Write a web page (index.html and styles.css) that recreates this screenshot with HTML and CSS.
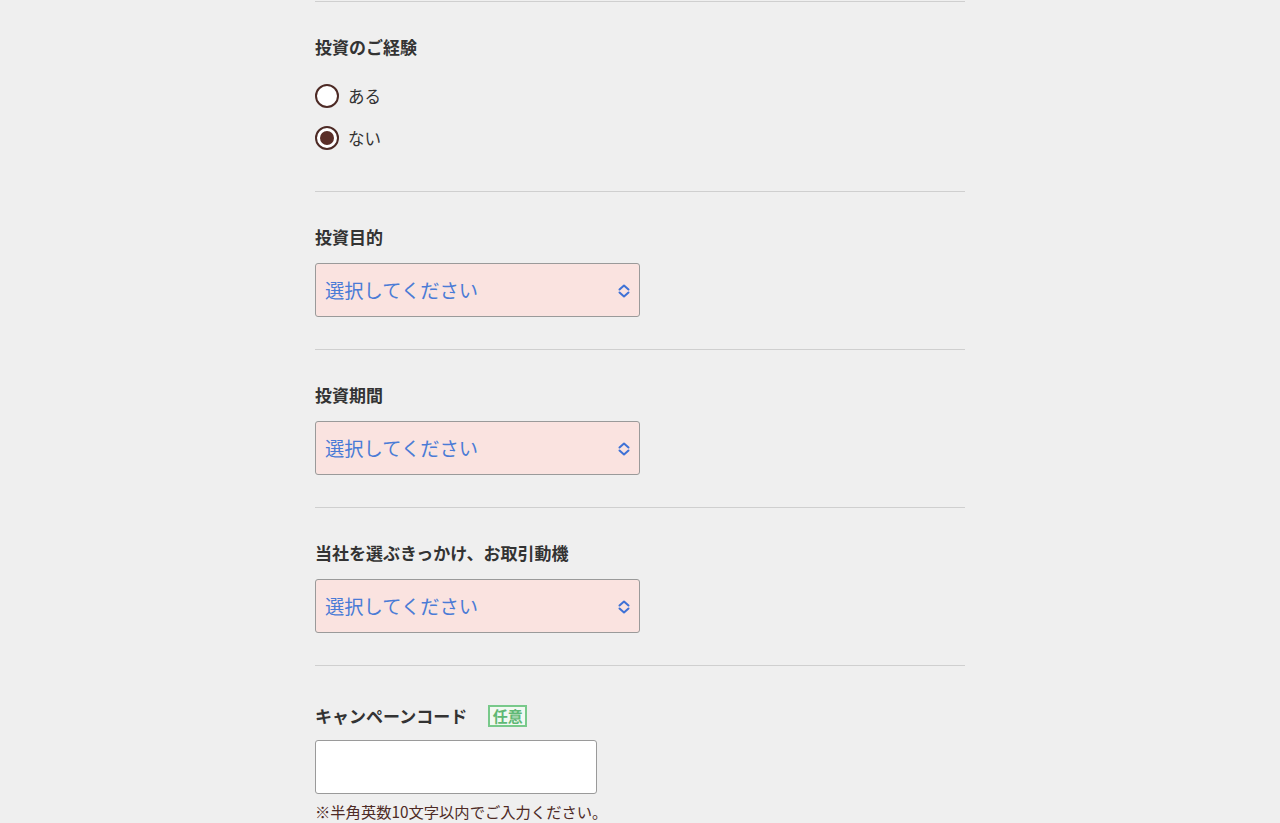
FILE: index.html
```html
<!DOCTYPE html>
<html lang="ja">
<head>
<meta charset="utf-8">
<link rel="stylesheet" href="styles.css">
</head>
<body>
<main class="form">
  <section class="field">
    <div class="label">投資のご経験</div>
    <div class="radios">
      <label class="radio"><span class="dot"></span><span>ある</span></label>
      <label class="radio"><span class="dot checked"></span><span>ない</span></label>
    </div>
  </section>
  <section class="field">
    <div class="label">投資目的</div>
    <div class="select"><span>選択してください</span>
      <svg class="chev" width="14" height="16" viewBox="0 0 14 16"><path d="M2.5 6.5 L7 2.5 L11.5 6.5 M2.5 9.5 L7 13.5 L11.5 9.5" fill="none" stroke="#3f72d6" stroke-width="2" stroke-linecap="round" stroke-linejoin="round"/></svg>
    </div>
  </section>
  <section class="field">
    <div class="label">投資期間</div>
    <div class="select"><span>選択してください</span>
      <svg class="chev" width="14" height="16" viewBox="0 0 14 16"><path d="M2.5 6.5 L7 2.5 L11.5 6.5 M2.5 9.5 L7 13.5 L11.5 9.5" fill="none" stroke="#3f72d6" stroke-width="2" stroke-linecap="round" stroke-linejoin="round"/></svg>
    </div>
  </section>
  <section class="field">
    <div class="label">当社を選ぶきっかけ、お取引動機</div>
    <div class="select"><span>選択してください</span>
      <svg class="chev" width="14" height="16" viewBox="0 0 14 16"><path d="M2.5 6.5 L7 2.5 L11.5 6.5 M2.5 9.5 L7 13.5 L11.5 9.5" fill="none" stroke="#3f72d6" stroke-width="2" stroke-linecap="round" stroke-linejoin="round"/></svg>
    </div>
  </section>
  <section class="field last">
    <div class="label row">キャンペーンコード<span class="badge">任意</span></div>
    <div class="input"></div>
    <p class="note">※半角英数10文字以内でご入力ください。</p>
  </section>
</main>
</body>
</html>
```
FILE: styles.css
```css
* { box-sizing: border-box; }
html, body { margin: 0; padding: 0; }
body {
  background: #efefef;
  font-family: "Noto Sans CJK JP", "Noto Sans", sans-serif;
  color: #333;
}
.form {
  width: 650px;
  margin: 0 0 0 315px;
  border-top: 1px solid #cfcfcf;
  margin-top: 1px;
}
.field {
  border-bottom: 1px solid #cfcfcf;
  padding: 33px 0 32px;
}
.field.last { border-bottom: none; padding-top: 38px; }
.label {
  font-size: 17px;
  font-weight: 700;
  line-height: 24px;
  color: #333;
}
.label.row {
  display: flex;
  align-items: center;
  height: 24px;
}
.badge {
  margin-left: 21px;
  border: 2px solid #78c98a;
  color: #5fb874;
  background: #f2f8f2;
  font-size: 15px;
  font-weight: 700;
  height: 22px;
  line-height: 18px;
  padding: 0 2.5px;
}
.radios {
  margin-top: 25px;
  margin-bottom: 9px;
  display: flex;
  flex-direction: column;
  gap: 18px;
}
.radio {
  display: flex;
  align-items: center;
  gap: 9px;
  font-size: 16.5px;
  line-height: 24px;
  color: #333;
}
.dot {
  width: 24px;
  height: 24px;
  border-radius: 50%;
  border: 2px solid #4d2a25;
  background: #fff;
  flex: none;
  position: relative;
}
.dot.checked::after {
  content: "";
  position: absolute;
  left: 3px; top: 3px;
  width: 14px; height: 14px;
  border-radius: 50%;
  background: #5a2e28;
}
.select {
  margin-top: 14px;
  width: 325px;
  height: 54px;
  background: #fae3e0;
  border: 1px solid #9a9a9a;
  border-radius: 3px;
  display: flex;
  align-items: center;
  justify-content: space-between;
  padding: 0 8px 0 9px;
  font-size: 19.3px;
  color: #4a7bd6;
}
.chev { display: block; margin-top: 1px; }
.input {
  margin-top: 12px;
  width: 282px;
  height: 54px;
  background: #fff;
  border: 1px solid #9a9a9a;
  border-radius: 3px;
}
.note {
  margin: 6px 0 0;
  font-size: 15.3px;
  line-height: 22px;
  color: #4d2a25;
}
```
